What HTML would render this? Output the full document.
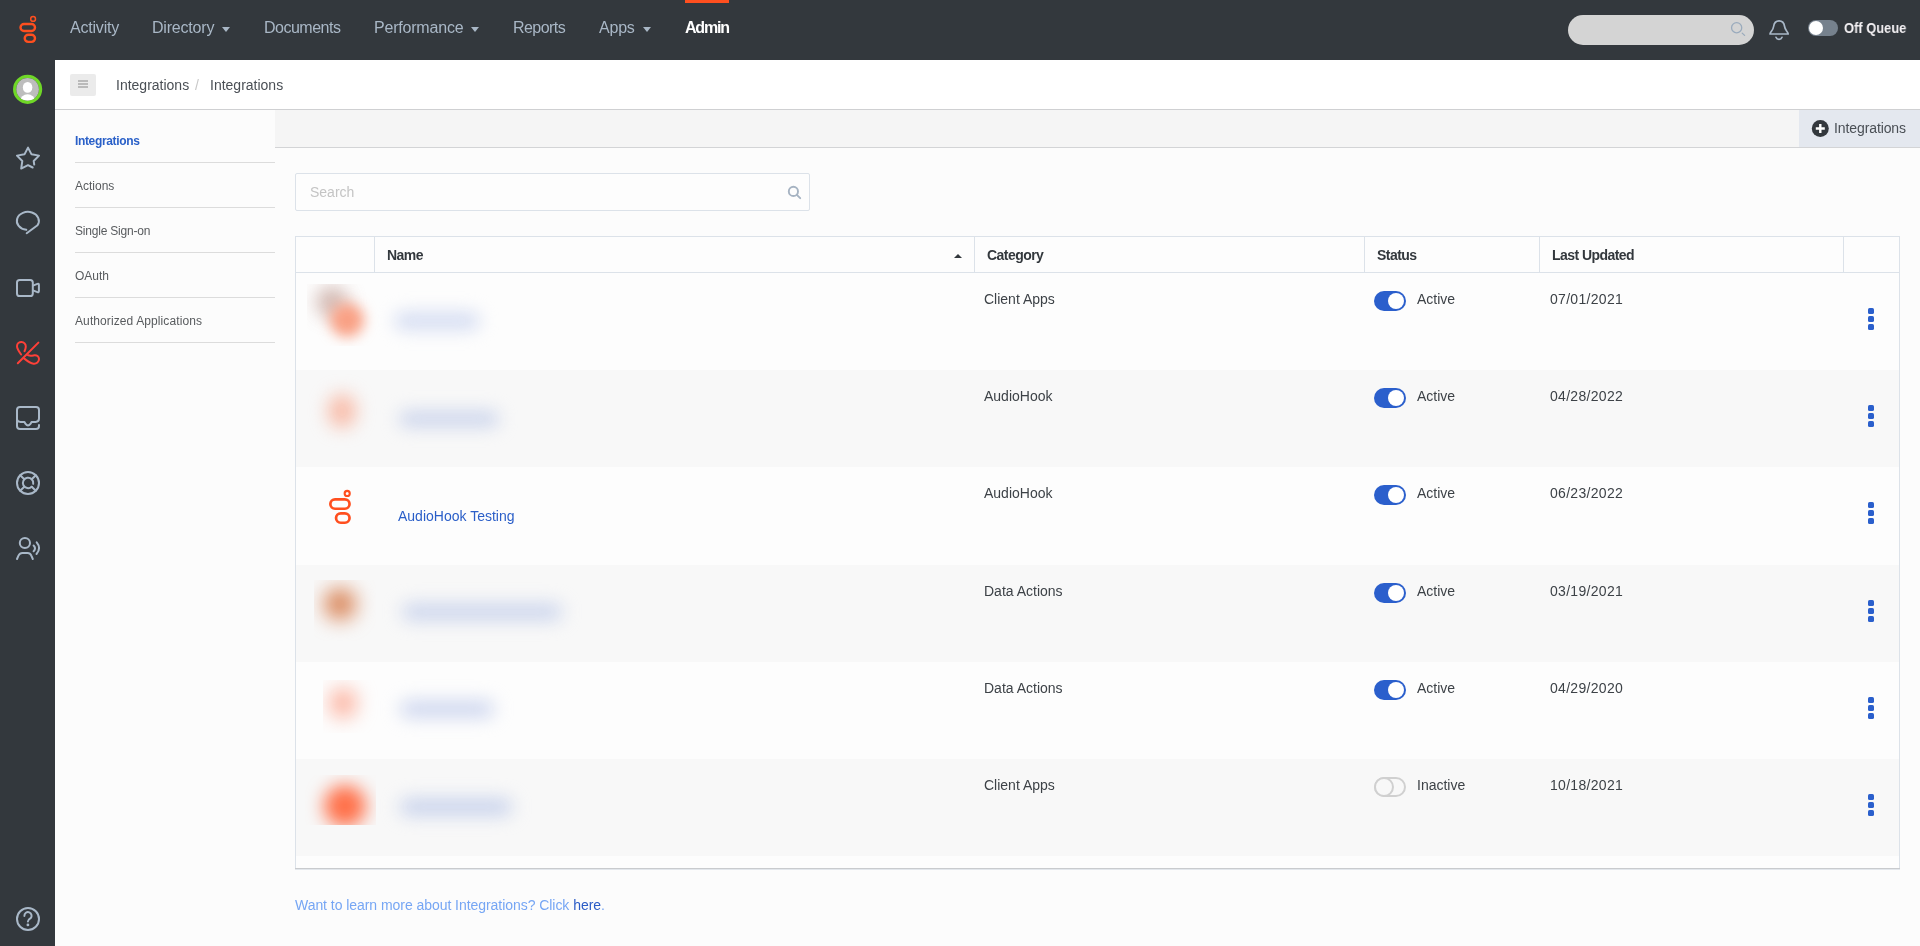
<!DOCTYPE html>
<html><head><meta charset="utf-8">
<style>
*{box-sizing:border-box;margin:0;padding:0}
html,body{width:1920px;height:946px;overflow:hidden;background:#fcfcfc;font-family:"Liberation Sans",sans-serif}
.abs{position:absolute}
#top{position:absolute;left:0;top:0;width:1920px;height:60px;background:#33383d}
#side{position:absolute;left:0;top:60px;width:55px;height:886px;background:#33383d}
.nav{will-change:transform;position:absolute;top:0;height:60px;line-height:56px;font-size:16px;letter-spacing:-0.2px;color:#a9b7c6;white-space:nowrap}
.caret{position:absolute;width:0;height:0;border-left:4.5px solid transparent;border-right:4.5px solid transparent;border-top:5px solid #a9b7c6}
#crumb{position:absolute;left:55px;top:60px;width:1865px;height:50px;background:#fff;border-bottom:1px solid #cfd0d2}
#subnav{position:absolute;left:55px;top:110px;width:220px;height:836px;background:#fcfcfc}
.sn{position:absolute;left:20px;width:200px;height:45px;border-bottom:1px solid #dcdcdc;font-size:12px;color:#585b5e}
#toolbar{position:absolute;left:275px;top:110px;width:1645px;height:38px;background:#f5f5f5;border-bottom:1px solid #d3d4d6}
#main{position:absolute;left:275px;top:148px;width:1645px;height:798px;background:#fcfcfc}
.t{position:absolute;white-space:nowrap;will-change:transform}
.th{font-size:14px;font-weight:bold;color:#33383d;letter-spacing:-0.55px}
.td{font-size:14px;color:#3d4247}
.row{left:0;width:1603px}
.tog{width:32px;height:20px;border-radius:10px}
.tog.on{background:#2b5fcc}
.tog.on i{position:absolute;left:14px;top:2px;width:16px;height:16px;border-radius:8px;background:#fff}
.tog.off{background:transparent;border:2px solid #d0d0d0}
.tog.off i{position:absolute;left:-2px;top:-2px;width:20px;height:20px;border-radius:10px;background:#f8f8f8;border:2px solid #d0d0d0}
.keb i{position:absolute;left:0;width:6px;height:6px;border-radius:1.6px;background:#2a5fcc}
</style></head><body>
<div id="top">
  <svg class="abs" style="left:0;top:0" width="60" height="60" viewBox="0 0 60 60">
    <circle cx="33.1" cy="18.9" r="2.4" fill="none" stroke="#ff4f1f" stroke-width="1.5"/>
    <rect x="20.5" y="24" width="14.5" height="7" rx="3.5" fill="none" stroke="#ff4f1f" stroke-width="2.4"/>
    <rect x="24.7" y="34.8" width="10.3" height="7.1" rx="3.55" fill="none" stroke="#ff4f1f" stroke-width="2.4"/>
  </svg>
  <div class="nav" style="left:70px">Activity</div>
  <div class="nav" style="left:152px">Directory</div><div class="caret" style="left:222px;top:27px"></div>
  <div class="nav" style="left:264px;letter-spacing:-0.5px">Documents</div>
  <div class="nav" style="left:374px">Performance</div><div class="caret" style="left:471px;top:27px"></div>
  <div class="nav" style="left:513px;letter-spacing:-0.55px">Reports</div>
  <div class="nav" style="left:599px">Apps</div><div class="caret" style="left:643px;top:27px"></div>
  <div class="nav" style="left:685px;color:#fff;font-weight:bold;letter-spacing:-1.2px">Admin</div>
  <div class="abs" style="left:685px;top:0;width:44px;height:3px;background:#ff4f1f"></div>
  <div class="abs" style="left:1568px;top:15px;width:186px;height:30px;border-radius:15px;background:#d4d4d4"></div>
  <svg class="abs" style="left:1720px;top:0" width="80" height="60" viewBox="1720 0 80 60" fill="none" stroke-linecap="round">
    <circle cx="1736.65" cy="27.7" r="5.1" stroke="#9aabbd" stroke-width="1.3"/>
    <path d="M1742.2 33.1 L1744.6 35.4" stroke="#9aabbd" stroke-width="1.3"/>
    <path d="M1770 34 L1788.2 34 Q1788.2 33 1786.6 31 Q1785 29 1784.6 26.5 Q1783.8 20.9 1779.1 20.9 Q1774.4 20.9 1773.6 26.5 Q1773.2 29 1771.6 31 Q1770 33 1770 34 Z" stroke="#a9b8c8" stroke-width="1.7" stroke-linejoin="round"/>
    <path d="M1776 37.3 A3.2 3.2 0 0 0 1782 37.3" stroke="#a9b8c8" stroke-width="1.7"/>
  </svg>
  <div class="abs" style="left:1808px;top:20px;width:30px;height:16px;border-radius:8px;background:#76818d"></div>
  <div class="abs" style="left:1809px;top:21px;width:14px;height:14px;border-radius:7px;background:#fff"></div>
  <div class="nav" style="left:1844px;color:#f2eff2;font-weight:bold;font-size:14.5px;letter-spacing:0;transform:scaleX(0.889);transform-origin:0 0">Off Queue</div>
</div>
<div id="side">
  <svg class="abs" style="left:0;top:0" width="55" height="886" viewBox="0 60 55 886" fill="none" stroke="#a9b8c8" stroke-width="2" stroke-linecap="round" stroke-linejoin="round">
    <circle cx="27.6" cy="89.3" r="12.95" stroke="#6fd727" stroke-width="3.3"/>
    <circle cx="27.6" cy="89.3" r="11.3" fill="#bdbdbd" stroke="none"/>
    <clipPath id="avc"><circle cx="27.6" cy="89.3" r="11.3"/></clipPath>
    <g clip-path="url(#avc)" fill="#fff" stroke="none">
      <ellipse cx="27.6" cy="87.4" rx="4.75" ry="5.4"/>
      <ellipse cx="27.6" cy="100.8" rx="7.4" ry="6.6"/>
    </g>
    <path d="M34.23 164.59 L33.71 161.05 L39.03 155.62 L31.53 154.35 L28.00 147.60 L24.47 154.35 L16.97 155.62 L22.29 161.05 L21.18 168.58 L28.00 165.20 L32.64 167.50"/>
    <path d="M26.3 229.8 A11 9 0 1 1 37.5 225.2 L26.7 233.2"/>
    <rect x="17" y="280" width="15.8" height="16" rx="2.6"/>
    <path d="M33 285.6 L37.4 283.9 Q38.9 283.4 38.9 285 L38.9 291 Q38.9 292.6 37.4 292.1 L33 290.4"/>
    <g stroke="#ff4038">
      <path d="M17.8 363.2 L38.4 342.6"/>
      <path d="M21.1 354.5 C18.8 351.3 17 348.6 17 346.2 C17 343.6 19.2 342 21.5 342 C23.9 342 25.9 344 25.8 346.6 C25.8 348.3 25.2 349.8 24.5 351.2"/>
      <path d="M28 355.2 C30.5 356.5 32.5 355.6 34.3 355.2 C36.8 354.8 39 356.6 39 359 C39 361.8 36.6 364 33.6 363.7 C30.6 363.4 27 360.8 24 358.4"/>
    </g>
    <path d="M39 425 L39 426 Q39 429 36 429 L20 429 Q17 429 17 426 L17 410 Q17 407 20 407 L36 407 Q39 407 39 410 L39 418.6 Q39 421.9 35.6 421.9 L31.7 421.9 L30.2 424.2 Q29.3 425.4 28 425.4 Q26.7 425.4 25.8 424.2 L24.3 421.9 L20.5 421.9 Q17.6 421.9 17 419.6"/>
    <circle cx="28" cy="483" r="11"/>
    <path d="M33.2 483.8 A5.2 5.2 0 1 0 31.7 486.7"/>
    <path d="M31.7 479.3 L35.8 475.2 M24.3 479.3 L20.2 475.2 M24.3 486.7 L20.2 490.8 M31.7 486.7 L35.8 490.8"/>
    <circle cx="24.9" cy="543" r="5.1"/>
    <path d="M17 559 L18.6 555.4 Q19.8 552.9 22.4 552.9 L27.6 552.9 Q30.2 552.9 31.2 555.4 L32.8 559"/>
    <path d="M33.6 545.5 Q36.4 548.4 33.6 551.3"/>
    <path d="M36.7 542.3 Q41.6 548.1 36.5 554"/>
    <circle cx="28" cy="919" r="11"/>
    <path d="M24.4 915.9 A3.6 3.6 0 1 1 30.6 918.2 Q27.9 920 27.9 921.4"/>
    <circle cx="27.9" cy="924.9" r="1.4" fill="#a9b8c8" stroke="none"/>
  </svg>
</div>
<div id="crumb">
  <div class="abs" style="left:15px;top:14px;width:26px;height:22px;border-radius:2px;background:#ebebeb"></div>
  <svg class="abs" style="left:15px;top:14px" width="26" height="22" viewBox="70 74 26 22" stroke="#ababab" stroke-width="1.5"><path d="M78 81 H88 M78 84 H88 M78 87.1 H88"/></svg>
  <div class="t" style="left:61px;top:17px;font-size:14px;color:#4a4f55">Integrations</div>
  <div class="t" style="left:140px;top:17px;font-size:14px;color:#c8c8c8">/</div>
  <div class="t" style="left:155px;top:17px;font-size:14px;color:#4a4f55">Integrations</div>
</div>
<div id="subnav">
  <div class="sn" style="top:8px"><span class="t" style="left:0;top:16px;color:#2a60c8;font-weight:bold;letter-spacing:-0.35px">Integrations</span></div>
  <div class="sn" style="top:53px"><span class="t" style="left:0;top:16px">Actions</span></div>
  <div class="sn" style="top:98px"><span class="t" style="left:0;top:16px;letter-spacing:-0.2px">Single Sign-on</span></div>
  <div class="sn" style="top:143px"><span class="t" style="left:0;top:16px">OAuth</span></div>
  <div class="sn" style="top:188px"><span class="t" style="left:0;top:16px;letter-spacing:0.1px">Authorized Applications</span></div>
</div>
<div id="toolbar">
  <div class="abs" style="left:1524px;top:0;width:121px;height:37px;background:#e4e8ef"></div>
  <svg class="abs" style="left:1536px;top:10px" width="18" height="18" viewBox="0 0 18 18"><circle cx="9.3" cy="8.5" r="8.5" fill="#33383d"/><path d="M9.3 4 V13 M4.8 8.5 H13.8" stroke="#fff" stroke-width="2.4"/></svg>
  <div class="t" style="left:1559px;top:10px;font-size:14px;color:#4a4f55;letter-spacing:-0.1px">Integrations</div>
</div>
<div id="main">
  <div class="abs" style="left:20px;top:25px;width:515px;height:38px;border:1px solid #dce2e9;border-radius:2px;background:#fdfdfd"></div>
  <div class="t" style="left:35px;top:36px;font-size:14px;color:#c4c4c4">Search</div>
  <svg class="abs" style="left:500px;top:25px" width="40" height="40" viewBox="775 173 40 40" fill="none" stroke="#a6b3c2" stroke-width="1.9" stroke-linecap="round"><circle cx="793.4" cy="191.4" r="4.6"/><path d="M796.8 194.8 L800.2 198.2"/></svg>
</div>
<div id="tbl" class="abs" style="left:295px;top:236px;width:1605px;height:634px;border:1px solid #dce2e9;border-bottom:0;background:#fdfdfd">
<div class="abs" style="left:78px;top:0;width:1px;height:35px;background:#dce2e9"></div>
<div class="abs" style="left:678px;top:0;width:1px;height:35px;background:#dce2e9"></div>
<div class="abs" style="left:1068px;top:0;width:1px;height:35px;background:#dce2e9"></div>
<div class="abs" style="left:1243px;top:0;width:1px;height:35px;background:#dce2e9"></div>
<div class="abs" style="left:1547px;top:0;width:1px;height:35px;background:#dce2e9"></div>
<div class="abs" style="left:0;top:35px;width:1603px;height:1px;background:#dce2e9"></div>
<div class="t th" style="left:91px;top:10px">Name</div>
<div class="t th" style="left:691px;top:10px">Category</div>
<div class="t th" style="left:1081px;top:10px">Status</div>
<div class="t th" style="left:1256px;top:10px">Last Updated</div>
<div class="abs" style="left:658px;top:17px;width:0;height:0;border-left:4px solid transparent;border-right:4px solid transparent;border-bottom:4px solid #33383d"></div>
<div class="abs row" style="top:36.000px;height:97.200px;background:#fdfdfd">
<div class="t td" style="left:688px;top:18px">Client Apps</div>
<div class="abs tog on" style="left:1078px;top:18px"><i></i></div>
<div class="t td" style="left:1121px;top:18px">Active</div>
<div class="t td" style="left:1254px;top:18px;letter-spacing:0.3px">07/01/2021</div>
<div class="abs keb" style="left:1572px;top:35px"><i style="top:0"></i><i style="top:8px"></i><i style="top:16px"></i></div>
</div>
<div class="abs row" style="top:133.200px;height:97.200px;background:#f8f8f8">
<div class="t td" style="left:688px;top:18px">AudioHook</div>
<div class="abs tog on" style="left:1078px;top:18px"><i></i></div>
<div class="t td" style="left:1121px;top:18px">Active</div>
<div class="t td" style="left:1254px;top:18px;letter-spacing:0.3px">04/28/2022</div>
<div class="abs keb" style="left:1572px;top:35px"><i style="top:0"></i><i style="top:8px"></i><i style="top:16px"></i></div>
</div>
<div class="abs row" style="top:230.400px;height:97.200px;background:#fdfdfd">
<div class="t td" style="left:688px;top:18px">AudioHook</div>
<div class="abs tog on" style="left:1078px;top:18px"><i></i></div>
<div class="t td" style="left:1121px;top:18px">Active</div>
<div class="t td" style="left:1254px;top:18px;letter-spacing:0.3px">06/23/2022</div>
<div class="abs keb" style="left:1572px;top:35px"><i style="top:0"></i><i style="top:8px"></i><i style="top:16px"></i></div>
</div>
<div class="abs row" style="top:327.600px;height:97.200px;background:#f8f8f8">
<div class="t td" style="left:688px;top:18px">Data Actions</div>
<div class="abs tog on" style="left:1078px;top:18px"><i></i></div>
<div class="t td" style="left:1121px;top:18px">Active</div>
<div class="t td" style="left:1254px;top:18px;letter-spacing:0.3px">03/19/2021</div>
<div class="abs keb" style="left:1572px;top:35px"><i style="top:0"></i><i style="top:8px"></i><i style="top:16px"></i></div>
</div>
<div class="abs row" style="top:424.800px;height:97.200px;background:#fdfdfd">
<div class="t td" style="left:688px;top:18px">Data Actions</div>
<div class="abs tog on" style="left:1078px;top:18px"><i></i></div>
<div class="t td" style="left:1121px;top:18px">Active</div>
<div class="t td" style="left:1254px;top:18px;letter-spacing:0.3px">04/29/2020</div>
<div class="abs keb" style="left:1572px;top:35px"><i style="top:0"></i><i style="top:8px"></i><i style="top:16px"></i></div>
</div>
<div class="abs row" style="top:522.000px;height:97.200px;background:#f8f8f8">
<div class="t td" style="left:688px;top:18px">Client Apps</div>
<div class="abs tog off" style="left:1078px;top:18px"><i></i></div>
<div class="t td" style="left:1121px;top:18px">Inactive</div>
<div class="t td" style="left:1254px;top:18px;letter-spacing:0.3px">10/18/2021</div>
<div class="abs keb" style="left:1572px;top:35px"><i style="top:0"></i><i style="top:8px"></i><i style="top:16px"></i></div>
</div>
</div>
<div class="abs" style="left:295px;top:868px;width:1605px;height:1px;background:#c9cbce"></div>
<div class="abs" style="left:295px;top:869px;width:1605px;height:1px;background:#e3e7ec"></div>
<div class="t" style="left:295px;top:897px;font-size:14px;color:#76a6f4;letter-spacing:-0.05px">Want to learn more about Integrations? Click <span style="color:#2b5cc6">here</span>.</div>
<div id="ov">
<div class="abs" style="left:307px;top:284px;width:100px;height:62px;overflow:hidden"><div class="abs" style="left:-307px;top:-284px;width:1000px;height:1000px"><div class="abs" style="left:316.0px;top:286.0px;width:32.0px;height:32.0px;border-radius:50%;background:#c9aaa2;filter:blur(9px);opacity:0.8"></div><div class="abs" style="left:330.0px;top:303.0px;width:34.0px;height:34.0px;border-radius:50%;background:#f9a084;filter:blur(6.5px);opacity:1"></div></div></div>
<div class="abs" style="left:394.0px;top:312.0px;width:86.0px;height:18.0px;border-radius:9.0px;background:#d5ddf2;filter:blur(8.5px);opacity:1"></div>
<div class="abs" style="left:328.2px;top:394.0px;width:28.0px;height:34.0px;border-radius:50%;background:#f8bca9;filter:blur(9px);opacity:1"></div>
<div class="abs" style="left:399.0px;top:410.8px;width:100.0px;height:16.0px;border-radius:8.0px;background:#ccd5ec;filter:blur(8.5px);opacity:1"></div>
<svg class="abs" style="left:320px;top:484px" width="40" height="44" viewBox="320 484 40 44" fill="none" stroke="#ff4f1f">
<circle cx="347.2" cy="493.4" r="2.55" stroke-width="2.1"/>
<rect x="330.35" y="499.35" width="19.2" height="9.4" rx="4.7" stroke-width="2.7"/>
<rect x="336.05" y="513.35" width="13.5" height="9.4" rx="4.7" stroke-width="2.7"/>
</svg>
<div class="t" style="left:398px;top:508px;font-size:14px;color:#2a5ec8">AudioHook Testing</div>
<div class="abs" style="left:314px;top:580px;width:62px;height:61px;overflow:hidden"><div class="abs" style="left:-314px;top:-580px;width:1000px;height:1000px"><div class="abs" style="left:324.0px;top:588.0px;width:32.0px;height:32.0px;border-radius:50%;background:#d98558;filter:blur(10px);opacity:1"></div></div></div>
<div class="abs" style="left:402.0px;top:603.5px;width:160.0px;height:16.0px;border-radius:8.0px;background:#c9d3ec;filter:blur(9px);opacity:1"></div>
<div class="abs" style="left:323px;top:680px;width:60px;height:53px;overflow:hidden"><div class="abs" style="left:-323px;top:-680px;width:1000px;height:1000px"><div class="abs" style="left:330.0px;top:688.0px;width:26.0px;height:30.0px;border-radius:50%;background:#fcae9a;filter:blur(10px);opacity:1"></div></div></div>
<div class="abs" style="left:400.0px;top:701.0px;width:94.0px;height:16.0px;border-radius:8.0px;background:#cbd4ee;filter:blur(9px);opacity:1"></div>
<div class="abs" style="left:305px;top:775px;width:71px;height:50px;overflow:hidden"><div class="abs" style="left:-305px;top:-775px;width:1000px;height:1000px"><div class="abs" style="left:324.0px;top:785.0px;width:42.0px;height:42.0px;border-radius:50%;background:#ff6f48;filter:blur(9px);opacity:1"></div></div></div>
<div class="abs" style="left:400.0px;top:799.0px;width:112.0px;height:16.0px;border-radius:8.0px;background:#c5d0eb;filter:blur(9px);opacity:1"></div>
</div>
</body></html>
